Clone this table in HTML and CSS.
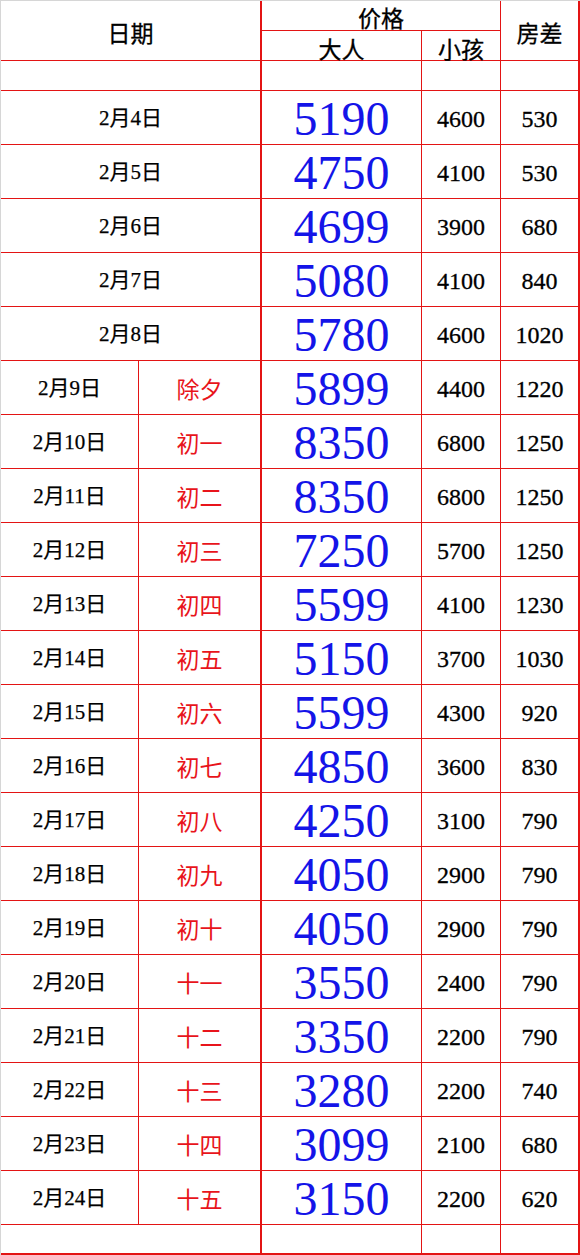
FILE: index.html
```html
<!DOCTYPE html>
<html lang="zh-CN">
<head>
<meta charset="utf-8">
<title>价格表</title>
<link rel="stylesheet" href="styles.css">
</head>
<body>
<div class="sheet">
  <div class="grid">
    <div class="c span2 rows2 thick head head-date">日期</div>
    <div class="c span2 head head-top">价格</div>
    <div class="c rows2 thick head head-date">房差</div>
    <div class="c head head-sub">大人</div>
    <div class="c head head-sub">小孩</div>

    <div class="c span2 thick blank"></div>
    <div class="c blank"></div>
    <div class="c blank"></div>
    <div class="c thick blank"></div>

    <div class="c span2 thick date">2月4日</div><div class="c adult">5190</div><div class="c num">4600</div><div class="c thick num">530</div>
    <div class="c span2 thick date">2月5日</div><div class="c adult">4750</div><div class="c num">4100</div><div class="c thick num">530</div>
    <div class="c span2 thick date">2月6日</div><div class="c adult">4699</div><div class="c num">3900</div><div class="c thick num">680</div>
    <div class="c span2 thick date">2月7日</div><div class="c adult">5080</div><div class="c num">4100</div><div class="c thick num">840</div>
    <div class="c span2 thick date">2月8日</div><div class="c adult">5780</div><div class="c num">4600</div><div class="c thick num">1020</div>

    <div class="c date">2月9日</div><div class="c thick lunar">除夕</div><div class="c adult">5899</div><div class="c num">4400</div><div class="c thick num">1220</div>
    <div class="c date">2月10日</div><div class="c thick lunar">初一</div><div class="c adult">8350</div><div class="c num">6800</div><div class="c thick num">1250</div>
    <div class="c date">2月11日</div><div class="c thick lunar">初二</div><div class="c adult">8350</div><div class="c num">6800</div><div class="c thick num">1250</div>
    <div class="c date">2月12日</div><div class="c thick lunar">初三</div><div class="c adult">7250</div><div class="c num">5700</div><div class="c thick num">1250</div>
    <div class="c date">2月13日</div><div class="c thick lunar">初四</div><div class="c adult">5599</div><div class="c num">4100</div><div class="c thick num">1230</div>
    <div class="c date">2月14日</div><div class="c thick lunar">初五</div><div class="c adult">5150</div><div class="c num">3700</div><div class="c thick num">1030</div>
    <div class="c date">2月15日</div><div class="c thick lunar">初六</div><div class="c adult">5599</div><div class="c num">4300</div><div class="c thick num">920</div>
    <div class="c date">2月16日</div><div class="c thick lunar">初七</div><div class="c adult">4850</div><div class="c num">3600</div><div class="c thick num">830</div>
    <div class="c date">2月17日</div><div class="c thick lunar">初八</div><div class="c adult">4250</div><div class="c num">3100</div><div class="c thick num">790</div>
    <div class="c date">2月18日</div><div class="c thick lunar">初九</div><div class="c adult">4050</div><div class="c num">2900</div><div class="c thick num">790</div>
    <div class="c date">2月19日</div><div class="c thick lunar">初十</div><div class="c adult">4050</div><div class="c num">2900</div><div class="c thick num">790</div>
    <div class="c date">2月20日</div><div class="c thick lunar">十一</div><div class="c adult">3550</div><div class="c num">2400</div><div class="c thick num">790</div>
    <div class="c date">2月21日</div><div class="c thick lunar">十二</div><div class="c adult">3350</div><div class="c num">2200</div><div class="c thick num">790</div>
    <div class="c date">2月22日</div><div class="c thick lunar">十三</div><div class="c adult">3280</div><div class="c num">2200</div><div class="c thick num">740</div>
    <div class="c date">2月23日</div><div class="c thick lunar">十四</div><div class="c adult">3099</div><div class="c num">2100</div><div class="c thick num">680</div>
    <div class="c date">2月24日</div><div class="c thick lunar">十五</div><div class="c adult">3150</div><div class="c num">2200</div><div class="c thick num">620</div>

    <div class="c span2 thick blank last"></div>
    <div class="c blank last"></div>
    <div class="c blank last"></div>
    <div class="c thick blank last"></div>
  </div>
</div>
</body>
</html>
```

FILE: styles.css
```css
html, body {
  margin: 0;
  padding: 0;
  background: #ffffff;
}

.sheet {
  width: 580px;
  height: 1255px;
  box-sizing: border-box;
  border-top: 1px solid #d6d6d6;
  border-left: 1px solid #d6d6d6;
  overflow: hidden;
}

.grid {
  display: grid;
  grid-template-columns: 138px 123px 160px 79px 79px;
  grid-template-rows: 30px 30px 30px repeat(21, 54px) 30px;
}

.c {
  box-sizing: border-box;
  border-right: 1px solid #e31414;
  border-bottom: 1px solid #e31414;
  display: flex;
  align-items: center;
  justify-content: center;
  line-height: 1;
  color: #111111;
  font-family: "Liberation Serif", "Noto Sans CJK SC", serif;
  white-space: nowrap;
}

.span2 { grid-column: span 2; }
.rows2 { grid-row: span 2; }
.thick { border-right-width: 2px; }
.last { border-bottom-width: 2px; }

.head {
  font-family: "Noto Sans CJK SC", sans-serif;
  font-size: 23px;
  color: #000000;
  -webkit-text-stroke: 0.3px #000000;
}
.head-date { padding-top: 4px; }
.head-top { padding-top: 4px; }
.head-sub { padding-top: 5px; }

.date {
  font-size: 21px;
  padding-top: 2px;
  color: #000000;
  -webkit-text-stroke: 0.25px #000000;
}

.lunar {
  font-family: "Noto Sans CJK SC", sans-serif;
  font-size: 23px;
  padding-top: 2px;
  color: #e8141b;
}

.adult {
  font-size: 48px;
  padding-top: 2px;
  color: #1414e8;
}

.num {
  font-size: 24px;
  padding-top: 2px;
  color: #000000;
  -webkit-text-stroke: 0.3px #000000;
}
```
